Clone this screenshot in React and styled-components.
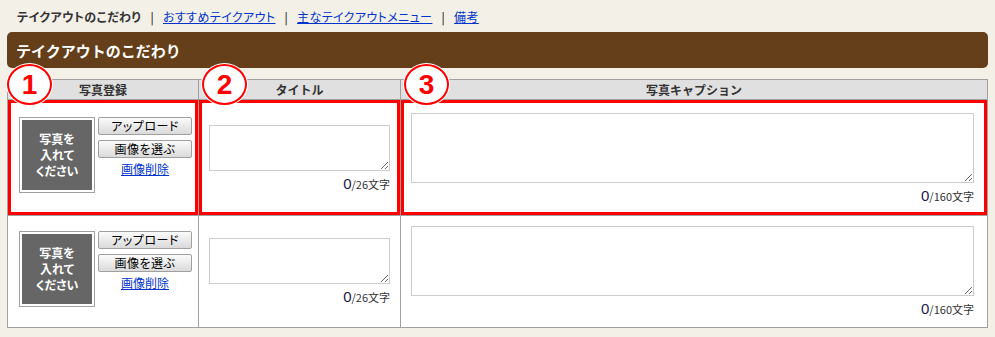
import React from 'react';
import styled, { createGlobalStyle } from 'styled-components';

const GlobalStyle = createGlobalStyle`
  body {
    margin: 0;
    background: #f3f0e8;
    font-family: "Noto Sans CJK JP", "Liberation Sans", sans-serif;
    font-size: 12px;
    color: #333;
  }
`;

const Page = styled.div`
  padding: 0 7px;
`;

const Nav = styled.div`
  display: flex;
  align-items: center;
  height: 18px;
  padding: 7px 10px 0;
  font-size: 12px;
  letter-spacing: 0.4px;
  font-feature-settings: "palt";

  .current {
    font-weight: bold;
    color: #333;
  }

  a {
    color: #0033cc;
    text-decoration: underline;
  }

  .sep {
    margin: 0 9px;
    color: #000;
  }
`;

const TitleBar = styled.h2`
  margin: 7px 0 0;
  height: 36px;
  display: flex;
  align-items: center;
  padding-left: 9px;
  background: #653f19;
  border-radius: 5px;
  color: #fff;
  font-size: 15px;
  font-weight: bold;
  letter-spacing: 0px;
`;

const Table = styled.table`
  margin-top: 11px;
  width: 981px;
  border-collapse: collapse;
  table-layout: fixed;
  background: #fff;
`;

const HeadCell = styled.th`
  position: relative;
  height: 19px;
  padding: 0;
  background: #e0e0e0;
  border: 1px solid #a0a0a0;
  font-size: 12px;
  font-weight: bold;
  color: #333;
  text-align: center;
  vertical-align: middle;
`;

const Marker = styled.span`
  position: absolute;
  z-index: 2;
  left: ${p => p.$left}px;
  top: -16px;
  width: 41px;
  height: 37px;
  border: 2px solid #ff0000;
  border-radius: 50%;
  background: #fff;
  color: #ff0000;
  font-family: "Liberation Sans", Arial, sans-serif;
  font-size: 28px;
  font-weight: bold;
  line-height: 37px;
  text-align: center;
  box-shadow: 0 0 0 1px #fff;
`;

const Cell = styled.td`
  border: 1px solid #a0a0a0;
  vertical-align: middle;
  padding: ${p => (p.$marked ? '13px' : '10px')} ${p => p.$right || 10}px
    ${p => (p.$marked ? '11px' : '10px')} ${p => p.$left || 10}px;
  box-shadow: ${p => (p.$marked ? 'inset 0 0 0 3px #ff0000' : 'none')};
`;

const PhotoCellBox = styled.td`
  border: 1px solid #a0a0a0;
  vertical-align: top;
  padding: ${p => (p.$marked ? '17px' : '15px')} 4px 0 11px;
  box-shadow: ${p => (p.$marked ? 'inset 0 0 0 3px #ff0000' : 'none')};
`;

const PhotoRow = styled.div`
  display: flex;
  align-items: flex-start;
  gap: 3px;
`;

const PhotoFrame = styled.div`
  width: 70px;
  height: 70px;
  padding: 2px;
  border: 1px solid #a0a0a0;
  background: #fff;
  flex-shrink: 0;
`;

const PhotoInner = styled.div`
  height: 100%;
  background: #666;
  color: #fff;
  font-size: 12px;
  font-weight: bold;
  line-height: 16px;
  display: flex;
  align-items: center;
  justify-content: center;
  text-align: center;
  font-feature-settings: "palt";
`;

const Actions = styled.div`
  display: flex;
  flex-direction: column;
  align-items: center;
  gap: 5px;
  width: 94px;
`;

const Button = styled.button`
  width: 94px;
  height: 18px;
  padding: 0;
  border: 1px solid #a0a0a0;
  border-radius: 2px;
  background: linear-gradient(#fbfbfb, #dadada);
  font-family: "Noto Sans CJK JP", sans-serif;
  font-size: 12px;
  font-weight: 400;
  font-feature-settings: "palt";
  letter-spacing: 0.5px;
  line-height: 16px;
  color: #000;
`;

const DeleteLink = styled.a`
  margin-top: -1px;
  color: #0033cc;
  font-size: 12px;
  text-decoration: underline;
  line-height: 14px;
`;

const TextArea = styled.textarea`
  display: block;
  box-sizing: border-box;
  width: 100%;
  height: ${p => p.$h}px;
  margin: 0;
  border: 1px solid #cccccc;
  background: #fff;
`;

const Counter = styled.div`
  margin-top: 5px;
  text-align: right;
  line-height: 16px;
  font-size: 11px;
  color: #333;

  b {
    font-family: "Liberation Sans", sans-serif;
    font-size: 15px;
    font-weight: normal;
    color: #1c1c48;
  }
`;

function PhotoCell({ marked }) {
  return (
    <PhotoCellBox $marked={marked}>
      <PhotoRow>
        <PhotoFrame>
          <PhotoInner>
            写真を
            <br />
            入れて
            <br />
            ください
          </PhotoInner>
        </PhotoFrame>
        <Actions>
          <Button>アップロード</Button>
          <Button>画像を選ぶ</Button>
          <DeleteLink href="#">画像削除</DeleteLink>
        </Actions>
      </PhotoRow>
    </PhotoCellBox>
  );
}

function Row({ marked }) {
  return (
    <tr>
      <PhotoCell marked={marked} />
      <Cell $marked={marked}>
        <TextArea $h={46} />
        <Counter>
          <b>0</b>/26文字
        </Counter>
      </Cell>
      <Cell $marked={marked} $left={10} $right={13}>
        <TextArea $h={70} />
        <Counter>
          <b>0</b>/160文字
        </Counter>
      </Cell>
    </tr>
  );
}

export default function App() {
  return (
    <Page>
      <GlobalStyle />
      <Nav>
        <span className="current">テイクアウトのこだわり</span>
        <span className="sep">|</span>
        <a href="#">おすすめテイクアウト</a>
        <span className="sep">|</span>
        <a href="#">主なテイクアウトメニュー</a>
        <span className="sep">|</span>
        <a href="#">備考</a>
      </Nav>

      <TitleBar>テイクアウトのこだわり</TitleBar>

      <Table>
        <colgroup>
          <col style={{ width: 191 }} />
          <col style={{ width: 202 }} />
          <col />
        </colgroup>
        <thead>
          <tr>
            <HeadCell>
              <Marker $left={-1}>1</Marker>
              写真登録
            </HeadCell>
            <HeadCell>
              <Marker $left={3}>2</Marker>
              タイトル
            </HeadCell>
            <HeadCell>
              <Marker $left={3}>3</Marker>
              写真キャプション
            </HeadCell>
          </tr>
        </thead>
        <tbody>
          <Row marked />
          <Row />
        </tbody>
      </Table>
    </Page>
  );
}
